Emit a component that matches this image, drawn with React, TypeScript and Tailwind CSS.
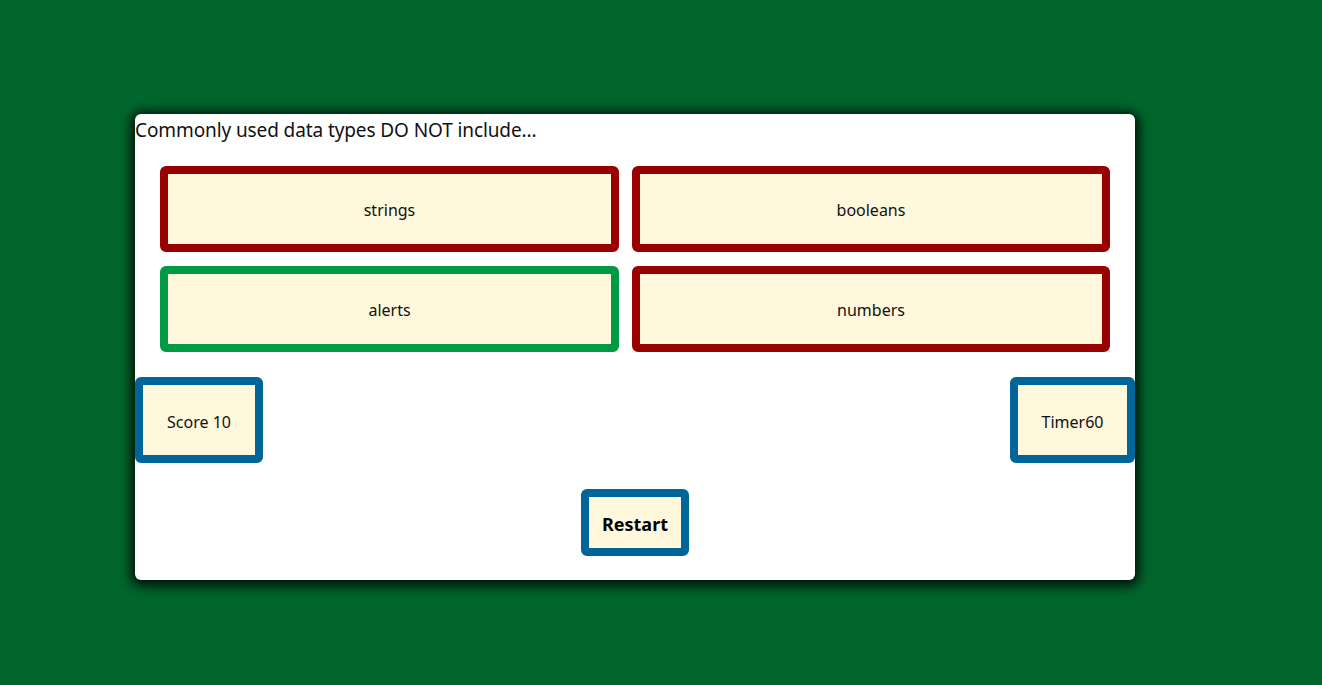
const answers = [
  { label: 'strings', width: 'w-[459px]', border: 'border-[#990000]' },
  { label: 'booleans', width: 'w-[478px]', border: 'border-[#990000]' },
  { label: 'alerts', width: 'w-[459px]', border: 'border-[#009944]' },
  { label: 'numbers', width: 'w-[478px]', border: 'border-[#990000]' },
]

function App() {
  return (
    <div
      className="flex h-[685px] w-full items-start bg-[#01662c] pl-[135px] pt-[114px]"
      style={{ fontFamily: '"Noto Sans", "Open Sans", sans-serif' }}
    >
      <div className="flex h-[466px] w-[1000px] flex-col rounded-md bg-white text-[#111] shadow-[0_2px_12px_4px_rgba(0,0,0,0.85)]">
        <h1 className="h-[32px] text-[19px] leading-[32px] tracking-[-0.1px]">Commonly used data types DO NOT include...</h1>

        <div className="mt-[20px] flex flex-wrap gap-x-[13px] gap-y-[14px] px-[25px]">
          {answers.map((a) => (
            <button
              key={a.label}
              className={`flex h-[86px] items-center justify-center rounded-md border-[8px] bg-[#fff8dc] pt-[2px] text-[16px] ${a.width} ${a.border}`}
            >
              {a.label}
            </button>
          ))}
        </div>

        <div className="mt-[25px] flex justify-between">
          <div className="flex h-[86px] w-[128px] items-center justify-center rounded-md border-[8px] border-[#006699] bg-[#fff8dc] pt-[3px] text-[16px]">
            Score 10
          </div>
          <div className="flex h-[86px] w-[125px] items-center justify-center rounded-md border-[8px] border-[#006699] bg-[#fff8dc] pt-[3px] text-[16px]">
            Timer60
          </div>
        </div>

        <div className="mt-[26px] flex justify-center">
          <button className="flex h-[67px] w-[108px] items-center justify-center rounded-md border-[8px] border-[#006699] bg-[#fff8dc] pt-[3px] text-[18px] font-bold text-black">
            Restart
          </button>
        </div>
      </div>
    </div>
  )
}

export default App
